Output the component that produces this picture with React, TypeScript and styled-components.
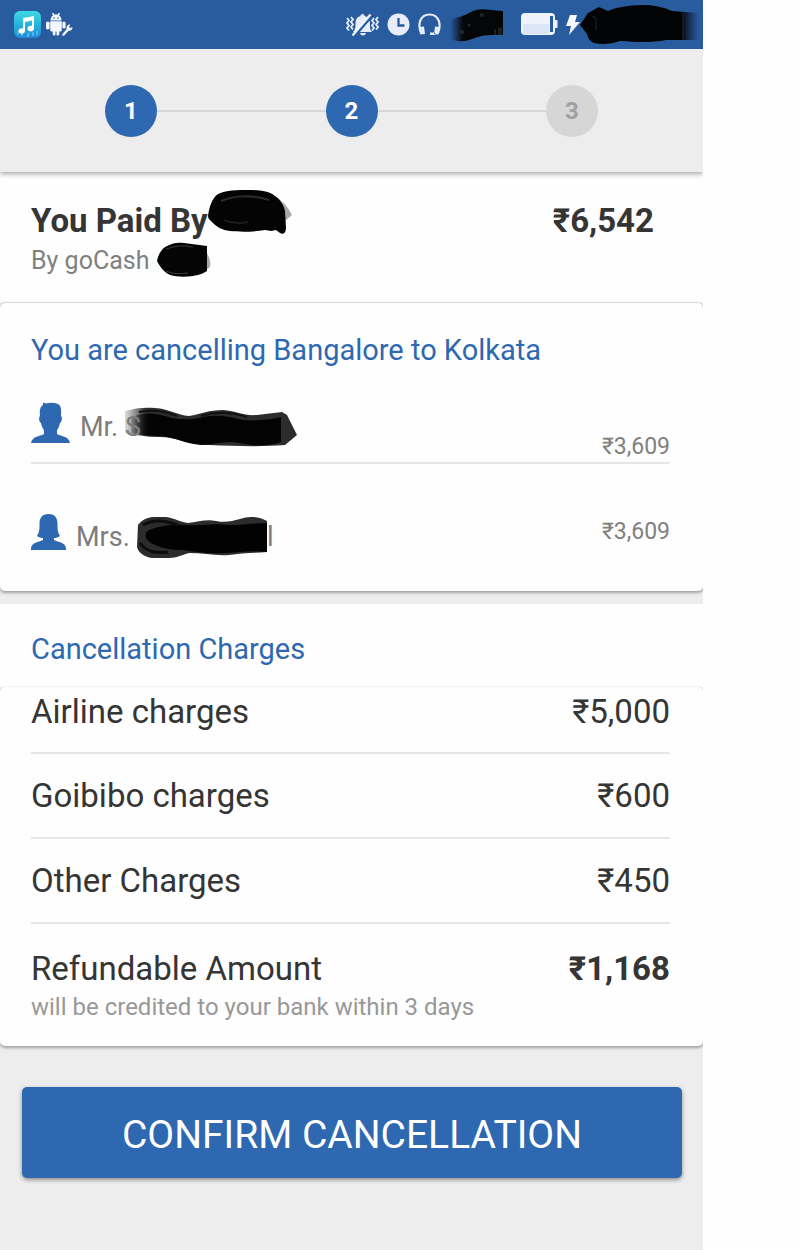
import React from "react";
import styled, { createGlobalStyle } from "styled-components";

const BLUE = "#2e68b0";

const GlobalStyle = createGlobalStyle`
  * { box-sizing: border-box; }
  body { margin: 0; background: #fefefe; }
  h1, h2, p, ul, ol, dl, dd { margin: 0; padding: 0; }
  svg { display: block; }
`;

const Page = styled.div`
  min-height: 100vh;
  padding-right: 97px;
  display: flex;
  font-family: Roboto, "Liberation Sans", sans-serif;
  color: #353535;
`;

const Screen = styled.div`
  flex: 1;
  min-width: 0;
  overflow: clip;
  background: #ededed;
`;

const StatusBar = styled.header`
  display: flex;
  align-items: center;
  height: 49px;
  padding: 0 3px 0 14px;
  background: #295c9f;
`;

const StatusGroup = styled.div<{ $gap: number; $end?: boolean }>`
  display: flex;
  align-items: center;
  gap: ${(p) => p.$gap}px;
  margin-left: ${(p) => (p.$end ? "auto" : "0")};
`;

const Stepper = styled.ol`
  display: flex;
  align-items: center;
  height: 123px;
  padding: 0 105px;
  list-style: none;
  box-shadow: 0 2px 5px rgba(0, 0, 0, 0.35);
  clip-path: inset(0 0 -10px 0);
  position: relative;
`;

const Step = styled.li<{ $pending?: boolean }>`
  display: flex;
  align-items: center;
  justify-content: center;
  width: 52px;
  height: 52px;
  border-radius: 50%;
  background: ${(p) => (p.$pending ? "#d6d6d6" : BLUE)};
  color: ${(p) => (p.$pending ? "#a0a0a0" : "#fff")};
  font-size: 24px;
  font-weight: 700;
`;

const StepLine = styled.li`
  flex: 1;
  height: 2px;
  background: #d8d8d8;
`;

const Summary = styled.section`
  display: flex;
  justify-content: space-between;
  padding: 29px 49px 22px 31px;
  background: #fefefe;
`;

const SummaryTitle = styled.h1`
  display: flex;
  font-size: 33px;
  line-height: 40px;
  font-weight: 700;
`;

const SummaryNote = styled.p`
  display: flex;
  font-size: 25px;
  line-height: 40px;
  color: #808080;
`;

const Total = styled.strong`
  font-size: 33px;
  line-height: 40px;
`;

const Card = styled.section<{ $flat?: boolean }>`
  position: relative;
  padding: 0 33px 0 31px;
  background: #fefefe;
  border-radius: 5px;
  box-shadow: 0 2px 3px rgba(0, 0, 0, 0.32),
    0 -1px 1px rgba(0, 0, 0, ${(p) => (p.$flat ? 0.04 : 0.16)});
`;

const Heading = styled.h2`
  font-size: 29px;
  line-height: 40px;
  font-weight: 400;
  color: ${BLUE};
`;

const CardHeading = styled(Heading)`
  padding-top: 27px;
`;

const ChargesHeading = styled(Heading)`
  margin-top: 13px;
  padding: 25px 31px 18px;
  background: #fefefe;
`;

const Passengers = styled.ul`
  list-style: none;
`;

const Passenger = styled.li`
  display: flex;
  justify-content: space-between;
  align-items: center;
  padding: 46px 0 37px;

  &:first-child {
    height: 94px;
    padding: 30px 0 0;
    align-items: flex-start;
    border-bottom: 2px solid #e6e6e6;
  }
`;

const Person = styled.div`
  display: flex;
  align-items: center;
  gap: 10px;
  height: 44px;
`;

const PersonName = styled.span`
  display: flex;
  padding-top: 10px;
  font-size: 27px;
  line-height: 34px;
  color: #7c7c7c;
`;

const Fare = styled.span`
  font-size: 23px;
  line-height: 30px;
  color: #808080;

  ${Passenger}:first-child & {
    align-self: flex-end;
  }
`;

const Charges = styled.dl`
  font-size: 33px;
`;

const Charge = styled.div`
  display: flex;
  justify-content: space-between;
  align-items: center;
  height: 85px;
  border-bottom: 2px solid #e6e6e6;

  &:first-child {
    height: 67px;
    padding-bottom: 17px;
  }
`;

const Refund = styled.div`
  display: flex;
  justify-content: space-between;
  padding: 21px 0 25px;
  line-height: 48px;
`;

const RefundAmount = styled.dd`
  font-weight: 700;
`;

const RefundNote = styled.p`
  font-size: 24px;
  line-height: 28px;
  color: #989898;
`;

const Confirm = styled.button`
  display: block;
  width: calc(100% - 43px);
  height: 91px;
  margin: 41px 21px 72px 22px;
  padding: 5px 0 0;
  border: 0;
  border-radius: 5px;
  background: ${BLUE};
  box-shadow: 0 2px 4px rgba(0, 0, 0, 0.4);
  color: #fff;
  font: 400 39px Roboto, "Liberation Sans", sans-serif;
  cursor: pointer;
`;

const Redacted = styled.span<{ $w: number }>`
  position: relative;
  width: ${(p) => p.$w}px;
  display: flex;
  justify-content: space-between;
`;

const Scribble = styled.svg<{ $y: number }>`
  position: absolute;
  left: 0;
  top: ${(p) => p.$y}px;
`;

const Letter = styled.span`
  position: relative;
`;

const MusicIcon = () => (
  <svg width="28" height="28" viewBox="0 0 28 28" aria-label="Music">
    <defs>
      <linearGradient id="music" x1="0" y1="0" x2="0" y2="1">
        <stop offset="0" stopColor="#3fd9e2" />
        <stop offset="0.5" stopColor="#25b4dd" />
        <stop offset="1" stopColor="#2288d6" />
      </linearGradient>
    </defs>
    <rect width="27" height="27" rx="6" fill="url(#music)" />
    <path d="M4 24v-4M8 25v-4M19 25v-4M23 24v-4M14 26v-4" stroke="#49b8ea" strokeWidth="2" />
    <path d="M9 7l11-2v12.500a3.300 2.800 0 1 1-2-2.500V9.500L11 11v9a3.300 2.800 0 1 1-2-2.600z" fill="#fff" />
  </svg>
);

const AndroidIcon = () => (
  <svg width="28" height="24" viewBox="0 0 28 24" fill="#f2f7ff" aria-label="Debugging">
    <path d="M4.500 7.500C4.500 3 8 1.500 10 1.500S15.500 3 15.500 7.500z" />
    <path d="M6.500 0l2 3M13.500 0l-2 3" stroke="#f2f7ff" strokeWidth="1.500" />
    <circle cx="8" cy="5" r=".8" fill="#295c9f" />
    <circle cx="12" cy="5" r=".8" fill="#295c9f" />
    <path d="M4.200 8.300h11.600V17q0 1.500-1.500 1.500h-1V21q0 1.500-1.600 1.500T10.500 21v-2.500h-1V21q0 1.500-1.300 1.500T6.700 21v-2.500H6Q4.200 18.500 4.200 17z" />
    <rect x="0" y="8.500" width="3.600" height="8" rx="1.700" />
    <rect x="16.400" y="8.500" width="3.200" height="7" rx="1.500" />
    <path d="M17.500 21.500l5-5.500" stroke="#f2f7ff" strokeWidth="2.600" strokeLinecap="round" />
    <path d="M20.500 16c-.5-3 1.500-5 4-4.500l-1.500 2 1 1.500 2.500-1c0 3-2 4.500-4.500 3.500z" />
  </svg>
);

const SilentIcon = () => (
  <svg width="33" height="24" viewBox="0 0 33 24" aria-label="Silent">
    <path d="M16.500 1c1.500 0 2 1 2 2 4 1 5.500 4 5.500 8 0 4 0 6 2 8H7c2-2 2.500-4 2.500-8 0-4 1-7 5-8 0-1 .5-2 2-2zM14 20h6q-.5 2.500-3 2.500T14 20z" fill="#e6edf8" />
    <path d="M8 23.500L26 2.500" stroke="#295c9f" strokeWidth="3" />
    <path d="M6.500 22.500L24.500 1.500" stroke="#f2f6fc" strokeWidth="2.200" />
    <path d="M1 5l2 2.500-2 2.500 2 2.500-2 2.500 2 2.500M5 4l2 2.500-2 2.500 2 2.500-2 2.500 2 2.500M28 5l-2 2.500 2 2.500-2 2.500 2 2.500-2 2.500M32 4l-2 2.500 2 2.500-2 2.500 2 2.500-2 2.500" fill="none" stroke="#e6edf8" strokeWidth="1.800" />
  </svg>
);

const ClockIcon = () => (
  <svg width="23" height="23" viewBox="0 0 23 23" aria-label="Alarm">
    <circle cx="11.500" cy="11.500" r="11" fill="#e8eef9" />
    <path d="M11.500 5v7.500h6" fill="none" stroke="#295c9f" strokeWidth="2.300" />
  </svg>
);

const HeadsetIcon = () => (
  <svg width="23" height="23" viewBox="0 0 23 23" aria-label="Headset">
    <path d="M3 20C-1 10 3 1.500 11.500 1.500S24 10 20 20" fill="none" stroke="#e8eef9" strokeWidth="2.200" />
    <path d="M2 14l4-.5 1 7.500-4.500.5zM21 14l-4-.5-1 7.500 4.500.5zM12 19.500h5v2.500h-5z" fill="#e8eef9" />
  </svg>
);

const SignalScribble = () => (
  <svg width="56" height="36" viewBox="0 0 56 36" aria-hidden="true">
    <defs>
      <linearGradient id="smudgeStart">
        <stop offset="0" stopColor="#050b16" stopOpacity="0" />
        <stop offset="0.250" stopColor="#050607" />
      </linearGradient>
    </defs>
    <path d="M1 14C8 9 14 10 20 6c8-5 15-4 22-3l12 1v24H42c-9 0-16 3-22 5-7 2-14 2-19-2z" fill="url(#smudgeStart)" />
    <path d="M46 22v6M50 21v7M52 20v8" stroke="#33383d" />
    <circle cx="13" cy="25" r="2" fill="#252a30" />
    <circle cx="33" cy="8" r="2" fill="#20252b" />
    <circle cx="20" cy="18" r="1.500" fill="#20252b" />
  </svg>
);

const BatteryIcon = () => (
  <svg width="37" height="23" viewBox="0 0 37 23" aria-label="Battery">
    <rect x="0" y="0" width="34" height="22" rx="4" fill="#eef3fb" />
    <rect x="29" y="3" width="3" height="16" fill="#295c9f" />
    <path d="M34 7h1.500q1 0 1 1v6q0 1-1 1H34z" fill="#eef3fb" />
    <rect x="2" y="11" width="26" height="10" fill="#d3deef" opacity=".7" />
  </svg>
);

const BoltIcon = () => (
  <svg width="14" height="20" viewBox="0 0 14 20" aria-label="Charging">
    <path d="M4 0h7L9 7h5L3 20l2-9H0z" fill="#f5f8fe" />
  </svg>
);

const ClockScribble = () => (
  <svg width="120" height="40" viewBox="0 0 120 40" aria-hidden="true">
    <defs>
      <linearGradient id="smudgeEnd">
        <stop offset="0.850" stopColor="#020304" />
        <stop offset="1" stopColor="#081223" stopOpacity="0" />
      </linearGradient>
    </defs>
    <path d="M0 20L8 8l11-6 9 4C39 1 53 0 68 0c8 1 16 2 24 6l27 2v27H86c-15 3-30 2-46 1-8 3-18 4-26 2-5-2-6-6-7-9z" fill="url(#smudgeEnd)" />
    <path d="M12 11l4 2v12M103 8v26M107 12v20" stroke="#25282c" fill="none" />
  </svg>
);

const ManIcon = () => (
  <svg width="39" height="41" viewBox="0 0 39 41" fill={BLUE} aria-hidden="true">
    <path d="M12 3V.5l3 1C19 .5 23 .5 27 2c3 1.500 3.500 5 3 12 1.500 1 1 6-1 7-1 4-2 6-3 7v4c3 2 12 2 13 9H0c1-7 10-7 13-9v-4c-1-1-2-3-3-7-2-1-2.500-6-1-7C8.500 8 9 5 12 3z" />
  </svg>
);

const WomanIcon = () => (
  <svg width="35" height="36" viewBox="0 0 35 36" fill={BLUE} aria-hidden="true">
    <path d="M17.500 0C24 0 26.500 4 26.500 10c0 5 0 8 2.500 12-2 1.500-4 2-6 2v2c4 2.500 12 2 12 9v1H0v-1c0-7 8-6.500 12-9v-2c-2 0-4-.5-6-2 2.500-4 2.500-7 2.500-12C8.500 4 11 0 17.500 0z" />
  </svg>
);

const charges = [
  { label: "Airline charges", amount: "₹5,000" },
  { label: "Goibibo charges", amount: "₹600" },
  { label: "Other Charges", amount: "₹450" },
];

export default function App() {
  return (
    <Page>
      <GlobalStyle />
      <Screen>
        <StatusBar>
          <StatusGroup $gap={4}>
            <MusicIcon />
            <AndroidIcon />
          </StatusGroup>
          <StatusGroup $gap={16} $end>
            <StatusGroup $gap={8}>
              <SilentIcon />
              <ClockIcon />
              <HeadsetIcon />
              <SignalScribble />
            </StatusGroup>
            <StatusGroup $gap={8}>
              <BatteryIcon />
              <StatusGroup $gap={0}>
                <BoltIcon />
                <ClockScribble />
              </StatusGroup>
            </StatusGroup>
          </StatusGroup>
        </StatusBar>
        <Stepper>
          <Step>1</Step>
          <StepLine aria-hidden="true" />
          <Step>2</Step>
          <StepLine aria-hidden="true" />
          <Step $pending>3</Step>
        </Stepper>
        <main>
          <Summary>
            <div>
              <SummaryTitle>
                You Paid By
                <Redacted $w={84}>
                  <Scribble $y={-12} width="86" height="48" viewBox="0 0 86 48" aria-hidden="true">
                    <path d="M68 8q10 6 16 18l-7 6z" fill="#aaa" />
                    <path d="M0 27C1 19 4 9 10 5 18 1 29 1 41 1c10 0 20 1 26 6 6 4 9 10 10 15l1 17c0 5-3 7-6 5l-4-3-5 1-6-1c-12 2-25 2-35 1-8-1-13-4-17-8-3-3-5-4-5-7z" fill="#040404" />
                    <path d="M13 12c14-6 33-6 48-1" stroke="#2c2c2c" strokeWidth="2" fill="none" />
                    <path d="M16 31q11 5 24 2" stroke="#1a1a1a" strokeWidth="2" fill="none" />
                  </Scribble>
                </Redacted>
              </SummaryTitle>
              <SummaryNote>
                By goCash&nbsp;
                <Redacted $w={54}>
                  <Scribble $y={0} width="56" height="38" viewBox="0 0 56 38" aria-hidden="true">
                    <path d="M48 8q8 10 6 18l-8 6z" fill="#aaa" />
                    <path d="M1 20C2 14 5 9 9 6c7-4 12-5 19-4l23 3v25c-5 3-8 4-14 5-8 1-16 1-23-1-6-3-10-8-13-14z" fill="#050505" />
                    <path d="M10 8q14-5 27-2M10 30q9 4 22 2" stroke="#3a3a3a" fill="none" />
                  </Scribble>
                </Redacted>
              </SummaryNote>
            </div>
            <Total>₹6,542</Total>
          </Summary>

          <Card>
            <CardHeading>You are cancelling Bangalore to Kolkata</CardHeading>
            <Passengers>
              <Passenger>
                <Person>
                  <ManIcon />
                  <PersonName>
                    Mr.&nbsp;
                    <Redacted $w={172}>
                      <Scribble $y={-4} width="174" height="42" viewBox="0 0 174 42" aria-hidden="true">
                        <defs>
                          <linearGradient id="nameFade">
                            <stop offset="0" stopColor="#555" stopOpacity="0.200" />
                            <stop offset="0.120" stopColor="#2c2c2c" />
                          </linearGradient>
                          <linearGradient id="coreFade">
                            <stop offset="0" stopColor="#111" stopOpacity="0.200" />
                            <stop offset="0.120" stopColor="#030303" />
                          </linearGradient>
                        </defs>
                        <path d="M0 5C10 2 20 1 30 2c14 1 22 7 34 8 12-2 20-6 34-6 14 1 20 6 34 5l25-3 5 3 10 20-12 10c-26 2-50 1-76 0-20 0-32-8-50-8-12 0-24-2-34-4z" fill="url(#nameFade)" />
                        <path d="M6 12C18 6 28 7 40 10c12 4 22 4 34 2 16-4 28-2 44 2 12 1 24 0 38-3v25c-14 5-28 4-42 1-14-3-24 2-38 2-16-1-26-8-40-9-12 0-20-1-30-3z" fill="url(#coreFade)" />
                        <path d="M14 6q18-4 38 4M76 10q22-7 46 1" fill="none" stroke="#111" strokeWidth="2" />
                      </Scribble>
                      <Letter>S</Letter>
                    </Redacted>
                  </PersonName>
                </Person>
                <Fare>₹3,609</Fare>
              </Passenger>
              <Passenger>
                <Person>
                  <WomanIcon />
                  <PersonName>
                    Mrs.&nbsp;
                    <Redacted $w={137}>
                      <span />
                      <Letter>l</Letter>
                      <Scribble $y={-4} width="131" height="43" viewBox="0 0 131 43" aria-hidden="true">
                        <path d="M2 9C6 4 10 2 16 1h14c8 1 14 5 22 6 10-1 18-4 28-2 10 2 16 0 24-2 8-3 18-3 27 2v31c-14 1-26 1-38 3-14 1-26-2-40-2-8 2-12 5-20 5H16C8 41 2 36 1 31z" fill="#2c2c2c" />
                        <path d="M13 14c10-4 22-6 36-5 16 1 30-2 44 0 14 0 26-2 38-2v29c-16-2-30 1-44 1-14 1-26-1-40-3-12 0-22-2-30-6-8-4-10-10-4-14z" fill="#020202" />
                        <path d="M7 9q14-8 34 0M4 27q8 12 28 9" fill="none" stroke="#0c0c0c" strokeWidth="3" />
                      </Scribble>
                    </Redacted>
                  </PersonName>
                </Person>
                <Fare>₹3,609</Fare>
              </Passenger>
            </Passengers>
          </Card>

          <ChargesHeading>Cancellation Charges</ChargesHeading>
          <Card $flat>
            <Charges>
              {charges.map((c) => (
                <Charge key={c.label}>
                  <dt>{c.label}</dt>
                  <dd>{c.amount}</dd>
                </Charge>
              ))}
              <Refund>
                <dt>
                  Refundable Amount
                  <RefundNote>will be credited to your bank within 3 days</RefundNote>
                </dt>
                <RefundAmount>₹1,168</RefundAmount>
              </Refund>
            </Charges>
          </Card>
          <Confirm type="button">CONFIRM CANCELLATION</Confirm>
        </main>
      </Screen>
    </Page>
  );
}
